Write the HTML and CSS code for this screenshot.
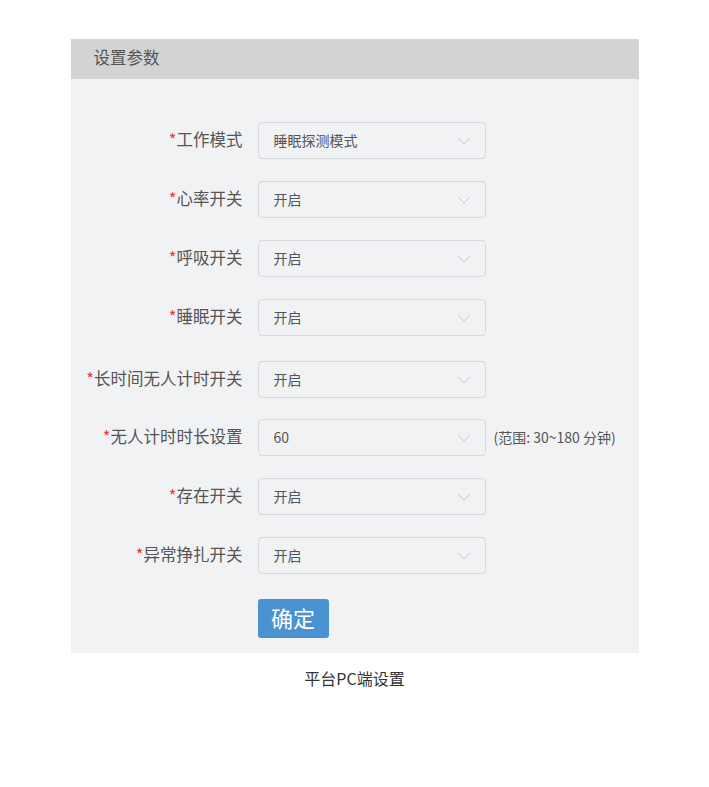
FILE: index.html
```html
<!DOCTYPE html>
<html lang="zh-CN">
<head>
<meta charset="utf-8">
<title>设置参数</title>
<link rel="stylesheet" href="styles.css">
</head>
<body>
<div class="panel">
  <div class="panel-header">设置参数</div>
  <div class="panel-body">
    <div class="row">
      <label class="label"><span class="req">*</span>工作模式</label>
      <div class="select"><span>睡眠探测模式</span><svg class="chev" width="14" height="8" viewBox="0 0 14 8"><polyline points="1,1 7,7 13,1" fill="none" stroke="#c7cad0" stroke-width="1"/></svg></div>
    </div>
    <div class="row">
      <label class="label"><span class="req">*</span>心率开关</label>
      <div class="select"><span>开启</span><svg class="chev" width="14" height="8" viewBox="0 0 14 8"><polyline points="1,1 7,7 13,1" fill="none" stroke="#c7cad0" stroke-width="1"/></svg></div>
    </div>
    <div class="row">
      <label class="label"><span class="req">*</span>呼吸开关</label>
      <div class="select"><span>开启</span><svg class="chev" width="14" height="8" viewBox="0 0 14 8"><polyline points="1,1 7,7 13,1" fill="none" stroke="#c7cad0" stroke-width="1"/></svg></div>
    </div>
    <div class="row">
      <label class="label"><span class="req">*</span>睡眠开关</label>
      <div class="select"><span>开启</span><svg class="chev" width="14" height="8" viewBox="0 0 14 8"><polyline points="1,1 7,7 13,1" fill="none" stroke="#c7cad0" stroke-width="1"/></svg></div>
    </div>
    <div class="row row-spaced">
      <label class="label"><span class="req">*</span>长时间无人计时开关</label>
      <div class="select"><span>开启</span><svg class="chev" width="14" height="8" viewBox="0 0 14 8"><polyline points="1,1 7,7 13,1" fill="none" stroke="#c7cad0" stroke-width="1"/></svg></div>
    </div>
    <div class="row row-tight">
      <label class="label"><span class="req">*</span>无人计时时长设置</label>
      <div class="select"><span>60</span><svg class="chev" width="14" height="8" viewBox="0 0 14 8"><polyline points="1,1 7,7 13,1" fill="none" stroke="#c7cad0" stroke-width="1"/></svg></div>
      <span class="hint">(范围: 30~180 分钟)</span>
    </div>
    <div class="row">
      <label class="label"><span class="req">*</span>存在开关</label>
      <div class="select"><span>开启</span><svg class="chev" width="14" height="8" viewBox="0 0 14 8"><polyline points="1,1 7,7 13,1" fill="none" stroke="#c7cad0" stroke-width="1"/></svg></div>
    </div>
    <div class="row">
      <label class="label"><span class="req">*</span>异常挣扎开关</label>
      <div class="select"><span>开启</span><svg class="chev" width="14" height="8" viewBox="0 0 14 8"><polyline points="1,1 7,7 13,1" fill="none" stroke="#c7cad0" stroke-width="1"/></svg></div>
    </div>
    <div class="actions">
      <button class="btn">确定</button>
    </div>
  </div>
</div>
<p class="caption">平台PC端设置</p>
</body>
</html>
```
FILE: styles.css
```css
* { box-sizing: border-box; }
html, body { margin: 0; padding: 0; background: #ffffff; }
body {
  padding-top: 39px;
  font-family: "Noto Sans CJK SC", "Noto Sans", "Liberation Sans", sans-serif;
  color: #555555;
}
.panel {
  width: 568px;
  margin: 0 auto;
  background: #f1f2f4;
}
.panel-header {
  height: 40px;
  background: #d2d3d5;
  padding-left: 23px;
  font-size: 16.5px;
  line-height: 37px;
  color: #555555;
}
.panel-body {
  padding: 43px 0 15px 0;
  display: flex;
  flex-direction: column;
  gap: 22px;
}
.row {
  display: flex;
  align-items: center;
  height: 37px;
}
.row-spaced { margin-top: 3px; }
.row-tight { margin-top: -1px; }
.label {
  width: 172px;
  text-align: right;
  font-size: 16.5px;
  line-height: 20px;
  padding-bottom: 3px;
  color: #555555;
  white-space: nowrap;
  margin-right: 15px;
}
.req { color: #f0353b; }
.select {
  width: 228px;
  height: 37px;
  border: 1px solid #d6d8dc;
  border-radius: 4px;
  background: #f1f2f4;
  display: flex;
  align-items: center;
  justify-content: space-between;
  padding: 0 14px 2px 15px;
  font-size: 14px;
  color: #555555;
}
.chev { display: block; margin-top: 2px; }
.hint {
  margin-left: 8px;
  font-size: 14px;
  padding-bottom: 2px;
  color: #555555;
  white-space: nowrap;
}
.actions {
  padding-left: 187px;
  margin-top: 3px;
}
.btn {
  width: 71px;
  height: 39px;
  border: none;
  border-radius: 3px;
  background: #4b92d0;
  color: #ffffff;
  font-family: "Noto Sans CJK SC", "Noto Sans", sans-serif;
  font-size: 22px;
  line-height: 37px;
  padding: 0 0 2px 0;
}
.caption {
  margin: 13px 0 0 0;
  text-align: center;
  font-size: 16px;
  color: #333333;
}
```
